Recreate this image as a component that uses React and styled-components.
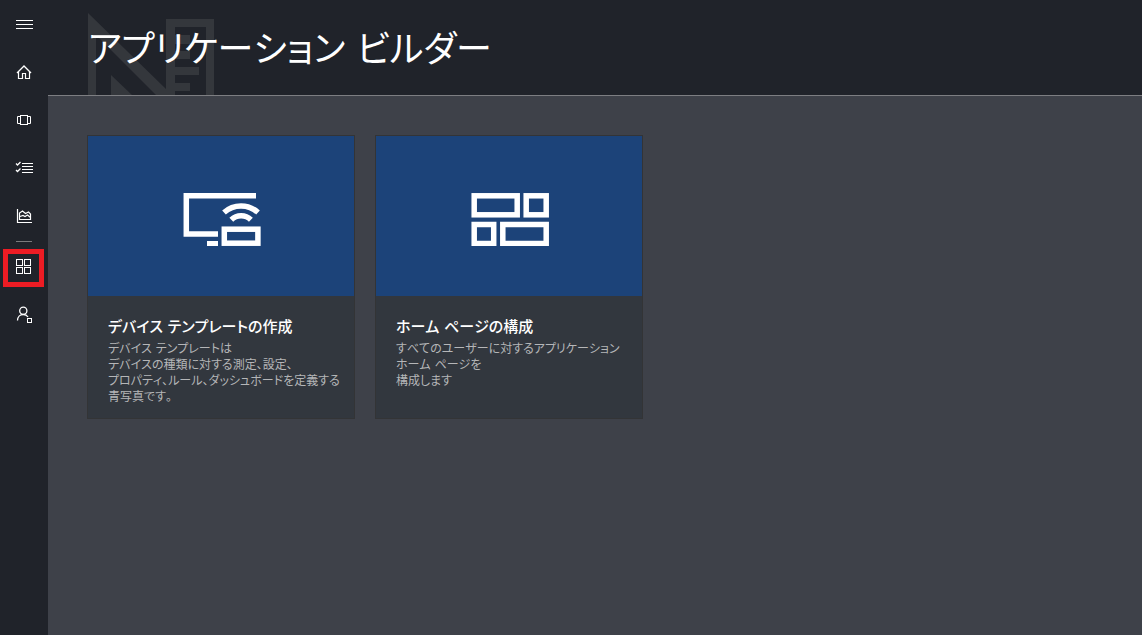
import React from 'react';
import styled, { createGlobalStyle } from 'styled-components';

const GlobalStyle = createGlobalStyle`
  *, *::before, *::after { box-sizing: border-box; }
  body {
    margin: 0;
    background: #3e4149;
    color: #fff;
    font-family: "DejaVu Sans", "Noto Sans CJK JP", sans-serif;
    font-feature-settings: "palt";
    font-kerning: none;
  }
`;

const Shell = styled.div`
  display: flex;
  min-height: 100vh;
`;

const Sidebar = styled.nav`
  flex: 0 0 48px;
  display: flex;
  flex-direction: column;
  background: #20232a;
`;

const NavButton = styled.button`
  position: relative;
  display: block;
  width: 48px;
  height: 48px;
  padding: 0;
  border: 0;
  background: none;
  color: #fff;
  cursor: pointer;
`;

const NavIcon = styled.svg`
  display: block;
  width: 48px;
  height: 48px;
  fill: none;
  stroke: currentColor;
  stroke-width: 1;
`;

const Highlight = styled.span`
  position: absolute;
  top: 7px;
  left: 3px;
  width: 41px;
  height: 38px;
  border: 5px solid #ed1c24;
`;

const Divider = styled.hr`
  width: 16px;
  height: 1px;
  margin: 1px 16px 0;
  border: 0;
  background: #7b7b7d;
`;

const Content = styled.div`
  flex: 1;
  min-width: 0;
`;

const Header = styled.header`
  position: relative;
  height: 96px;
  padding: 26px 40px 0;
  border-bottom: 1px solid #7d7e82;
  background: #20232a;
`;

const Watermark = styled.svg`
  position: absolute;
  left: 40px;
  bottom: 0;
  width: 128px;
  height: 82px;
  fill: #34373c;
`;

const Title = styled.h1`
  position: relative;
  margin: 0;
  font-size: 36px;
  font-weight: 400;
  line-height: 48px;
  white-space: nowrap;
`;

const Cards = styled.main`
  display: flex;
  flex-wrap: wrap;
  gap: 20px;
  padding: 39px;
`;

const Card = styled.a`
  display: flex;
  flex-direction: column;
  width: 268px;
  min-height: 284px;
  border: 1px solid #333436;
  background: #32373e;
  color: inherit;
  text-decoration: none;
`;

const CardArt = styled.div`
  display: flex;
  align-items: center;
  justify-content: center;
  height: 160px;
  background: #1c4379;
`;

const ArtIcon = styled.svg`
  width: 80px;
  height: 60px;
  fill: none;
  stroke: #fff;
  stroke-width: 6;
`;

const CardBody = styled.div`
  padding: 21px 0 12px 20px;
`;

const CardTitle = styled.h2`
  margin: 0 0 4px;
  font-size: 15px;
  font-weight: 500;
  line-height: 20px;
`;

const CardText = styled.p`
  margin: 0;
  color: #b5b6b8;
  font-size: 12px;
  line-height: 16px;
  white-space: nowrap;
`;

const navItems = [
  {
    label: 'メニュー',
    icon: <path d="M16 20.5h17M16 24.5h17M16 28.5h17" />,
  },
  {
    label: 'ホーム',
    icon: (
      <>
        <path d="M17 25l7-7 7 7" strokeWidth="1.400" />
        <path d="M18.500 24v6.500h4v-5h3v5h4v-6.500" strokeWidth="1.200" />
      </>
    ),
  },
  {
    label: 'デバイス',
    icon: (
      <>
        <rect x="20.5" y="19.5" width="7" height="9" />
        <path d="M20 20.500h-2.500v7h2.500M28 20.500h2.500v7h-2.500" />
      </>
    ),
  },
  {
    label: 'ジョブ',
    icon: (
      <>
        <path d="M22 19.500h11M22 22.500h11M22 25.500h11M22 28.500h11" />
        <path d="M16 19.500l1.500 1.500 3-3M16 26l1.500 1.500 3-3" strokeWidth="1.300" />
      </>
    ),
  },
  {
    label: '分析',
    icon: (
      <>
        <path d="M17.500 17v13.500h14.500" strokeWidth="1.200" />
        <path d="M19.500 27.500v-6.500l3-2 3 2.500 3-1.500 2 2v5.500zM20 24.500l3-1 2 1 2.500-1.500 3 2.500" strokeWidth="1.200" />
      </>
    ),
  },
];

const adminItems = [
  {
    label: 'アプリケーション ビルダー',
    active: true,
    icon: (
      <>
        <rect x="16.500" y="17.500" width="6" height="6" />
        <rect x="24.500" y="17.500" width="6" height="6" />
        <rect x="16.500" y="25.500" width="6" height="6" />
        <rect x="24.500" y="25.500" width="6" height="6" />
      </>
    ),
  },
  {
    label: '管理',
    icon: (
      <>
        <circle cx="23.300" cy="20.700" r="3.600" strokeWidth="1.300" />
        <path d="M17.500 30.500c0-3.500 2.500-6 5.800-6 2 0 3.700.900 4.700 2.500" strokeWidth="1.300" />
        <rect x="27.500" y="28.500" width="4" height="4" />
      </>
    ),
  },
];

const cards = [
  {
    title: 'デバイス テンプレートの作成',
    lines: [
      'デバイス テンプレートは',
      'デバイスの種類に対する測定、設定、',
      'プロパティ、ルール、ダッシュボードを定義する',
      '青写真です。',
    ],
    art: (
      <>
        <path d="M75 9.800H5.300v38.200h31.700" strokeWidth="5.500" />
        <path d="M26 57.500h11" strokeWidth="5" />
        <rect x="43.300" y="43.200" width="33.600" height="14" strokeWidth="5.500" />
        <path d="M43 26.500a25.500 25.500 0 0 1 34 0M50.300 33.800a14 14 0 0 1 19.600 0" strokeWidth="5.500" />
      </>
    ),
  },
  {
    title: 'ホーム ページの構成',
    lines: [
      'すべてのユーザーに対するアプリケーション',
      'ホーム ページを',
      '構成します',
    ],
    art: (
      <>
        <rect x="5.200" y="9.800" width="43" height="19" strokeWidth="5.500" />
        <rect x="57.200" y="9.800" width="20" height="19" strokeWidth="5.500" />
        <rect x="5.200" y="38.500" width="19.500" height="19" strokeWidth="5.500" />
        <rect x="33.800" y="38.500" width="43.400" height="19" strokeWidth="5.500" />
      </>
    ),
  },
];

function NavItem({ label, icon, active }) {
  return (
    <NavButton type="button" aria-label={label} aria-current={active ? 'page' : undefined}>
      <NavIcon viewBox="0 0 48 48" aria-hidden="true">{icon}</NavIcon>
      {active && <Highlight />}
    </NavButton>
  );
}

export default function App() {
  return (
    <>
      <GlobalStyle />
      <Shell lang="ja">
        <Sidebar>
          {navItems.map((item) => <NavItem key={item.label} {...item} />)}
          <Divider />
          {adminItems.map((item) => <NavItem key={item.label} {...item} />)}
        </Sidebar>
        <Content>
          <Header>
            <Watermark viewBox="0 0 128 82" aria-hidden="true">
              <path d="M0 0L78 76V6H126V82H118V14H87V22H102V31H87V38H102V46H87V54H111V62H87V70H102V78H87V82H68L8 22V82H0Z" />
              <path d="M23 62L44 82H23Z" />
            </Watermark>
            <Title>アプリケーション ビルダー</Title>
          </Header>
          <Cards>
            {cards.map((card) => (
              <Card key={card.title} href="#">
                <CardArt>
                  <ArtIcon viewBox="0 0 80 60" aria-hidden="true">{card.art}</ArtIcon>
                </CardArt>
                <CardBody>
                  <CardTitle>{card.title}</CardTitle>
                  <CardText>
                    {card.lines.map((line, i) => (
                      <React.Fragment key={line}>
                        {i > 0 && <br />}
                        {line}
                      </React.Fragment>
                    ))}
                  </CardText>
                </CardBody>
              </Card>
            ))}
          </Cards>
        </Content>
      </Shell>
    </>
  );
}
